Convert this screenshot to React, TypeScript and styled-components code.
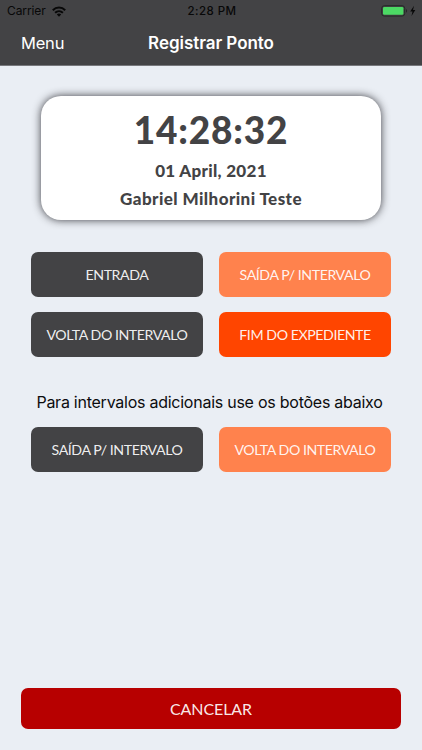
import React from "react";
import styled, { createGlobalStyle } from "styled-components";

const GlobalStyle = createGlobalStyle`
  * { box-sizing: border-box; }
  body { margin: 0; background: #eaeef4; }
`;

const Screen = styled.div`
  display: flex;
  flex-direction: column;
  align-items: center;
  height: 750px;
  background: #eaeef4;
  font-family: Inter, sans-serif;
  overflow: hidden;
`;

const Header = styled.header`
  width: 100%;
  height: 66px;
  flex: none;
  background: #434345;
  border-bottom: 1px solid #77787c;
`;

const StatusBar = styled.div`
  display: grid;
  grid-template-columns: 1fr auto 1fr;
  align-items: center;
  height: 22px;
  padding: 0 5px 0 7px;
  color: #080808;
  font-size: 12px;
  line-height: 22px;
`;

const Carrier = styled.div`
  display: flex;
  align-items: center;
  gap: 6px;
  letter-spacing: -0.1px;
`;

const Clock = styled.div`
  font-weight: 500;
  font-size: 11.5px;
  letter-spacing: 0.45px;
`;

const Power = styled.div`
  display: flex;
  justify-content: flex-end;
  align-items: center;
`;

const NavBar = styled.nav`
  display: grid;
  grid-template-columns: 1fr auto 1fr;
  align-items: center;
  height: 42px;
  padding: 0 21px;
  color: #fff;
`;

const MenuLink = styled.span`
  font-size: 16.5px;
  letter-spacing: -0.2px;
`;

const Title = styled.h1`
  margin: 0;
  font-size: 17px;
  font-weight: 600;
  letter-spacing: -0.05px;
`;

const Card = styled.section`
  display: flex;
  flex-direction: column;
  align-items: center;
  width: 340px;
  height: 124px;
  margin-top: 30px;
  padding-top: 9px;
  background: #fff;
  border-radius: 20px;
  box-shadow: 0 0 8px rgba(30, 30, 36, 0.85);
  color: #434345;
  font-family: Lato, sans-serif;
`;

const Time = styled.div`
  margin-bottom: 2px;
  font-size: 37px;
  font-weight: 900;
  line-height: 50px;
  letter-spacing: 0.8px;
`;

const CardLine = styled.div<{ $spacing: number }>`
  font-size: 17px;
  font-weight: 900;
  line-height: 28px;
  letter-spacing: ${(p) => p.$spacing}px;
`;

const ButtonGrid = styled.div<{ $top: number }>`
  display: grid;
  grid-template-columns: 172px 172px;
  gap: 15px 16px;
  grid-auto-rows: 45px;
  margin-top: ${(p) => p.$top}px;
`;

const Button = styled.button<{ $color: string }>`
  border: 0;
  border-radius: 7px;
  padding: 0;
  background: ${(p) => p.$color};
  color: rgba(255, 255, 255, 0.93);
  font-family: Lato, sans-serif;
  font-size: 14.2px;
  letter-spacing: -0.45px;
  white-space: nowrap;
`;

const CancelButton = styled(Button)`
  width: 380px;
  height: 41px;
  margin-top: auto;
  margin-bottom: 21px;
  font-size: 16px;
  letter-spacing: -0.1px;
`;

const Hint = styled.p`
  margin: 32px 3px 0 0;
  height: 26px;
  line-height: 26px;
  font-size: 16px;
  letter-spacing: -0.25px;
  color: #0c0c0e;
  white-space: nowrap;
`;

const DARK = "#434345";
const CORAL = "#ff824d";
const ORANGE = "#ff4500";

const WifiIcon = () => (
  <svg width="14" height="11" viewBox="0 0 14 11">
    <g fill="none" stroke="#080808" strokeWidth="2">
      <path d="M0.8 4.2C4.3 0.7 9.7 0.7 13.2 4.2" />
      <path d="M3.1 6.7C5.3 4.6 8.7 4.6 10.9 6.7" />
    </g>
    <path d="M4.8 8.4C6.1 7.3 7.9 7.3 9.2 8.4L7 10.7Z" fill="#080808" />
  </svg>
);

const BatteryIcon = () => (
  <svg width="36" height="12" viewBox="0 0 36 12">
    <rect x="0.7" y="0.7" width="23" height="10.4" rx="2.6" fill="none" stroke="#252927" strokeWidth="1" />
    <rect x="2" y="2" width="20.4" height="7.8" rx="1.3" fill="#4cd964" />
    <path d="M25 4.1C26.5 4.6 26.5 7.2 25 7.7Z" fill="#252927" />
    <path d="M33 0.8L29.2 6.5H31.5L30.5 11L34.3 5.1H32Z" fill="#080808" />
  </svg>
);

export default function App() {
  return (
    <Screen>
      <GlobalStyle />
      <Header>
        <StatusBar>
          <Carrier>Carrier <WifiIcon /></Carrier>
          <Clock>2:28 PM</Clock>
          <Power><BatteryIcon /></Power>
        </StatusBar>
        <NavBar>
          <MenuLink>Menu</MenuLink>
          <Title>Registrar Ponto</Title>
        </NavBar>
      </Header>
      <Card>
        <Time>14:28:32</Time>
        <CardLine $spacing={0.3}>01 April, 2021</CardLine>
        <CardLine $spacing={0.43}>Gabriel Milhorini Teste</CardLine>
      </Card>
      <ButtonGrid $top={32}>
        <Button $color={DARK}>ENTRADA</Button>
        <Button $color={CORAL}>SAÍDA P/ INTERVALO</Button>
        <Button $color={DARK}>VOLTA DO INTERVALO</Button>
        <Button $color={ORANGE}>FIM DO EXPEDIENTE</Button>
      </ButtonGrid>
      <Hint>Para intervalos adicionais use os botões abaixo</Hint>
      <ButtonGrid $top={12}>
        <Button $color={DARK}>SAÍDA P/ INTERVALO</Button>
        <Button $color={CORAL}>VOLTA DO INTERVALO</Button>
      </ButtonGrid>
      <CancelButton $color="#b70000">CANCELAR</CancelButton>
    </Screen>
  );
}
